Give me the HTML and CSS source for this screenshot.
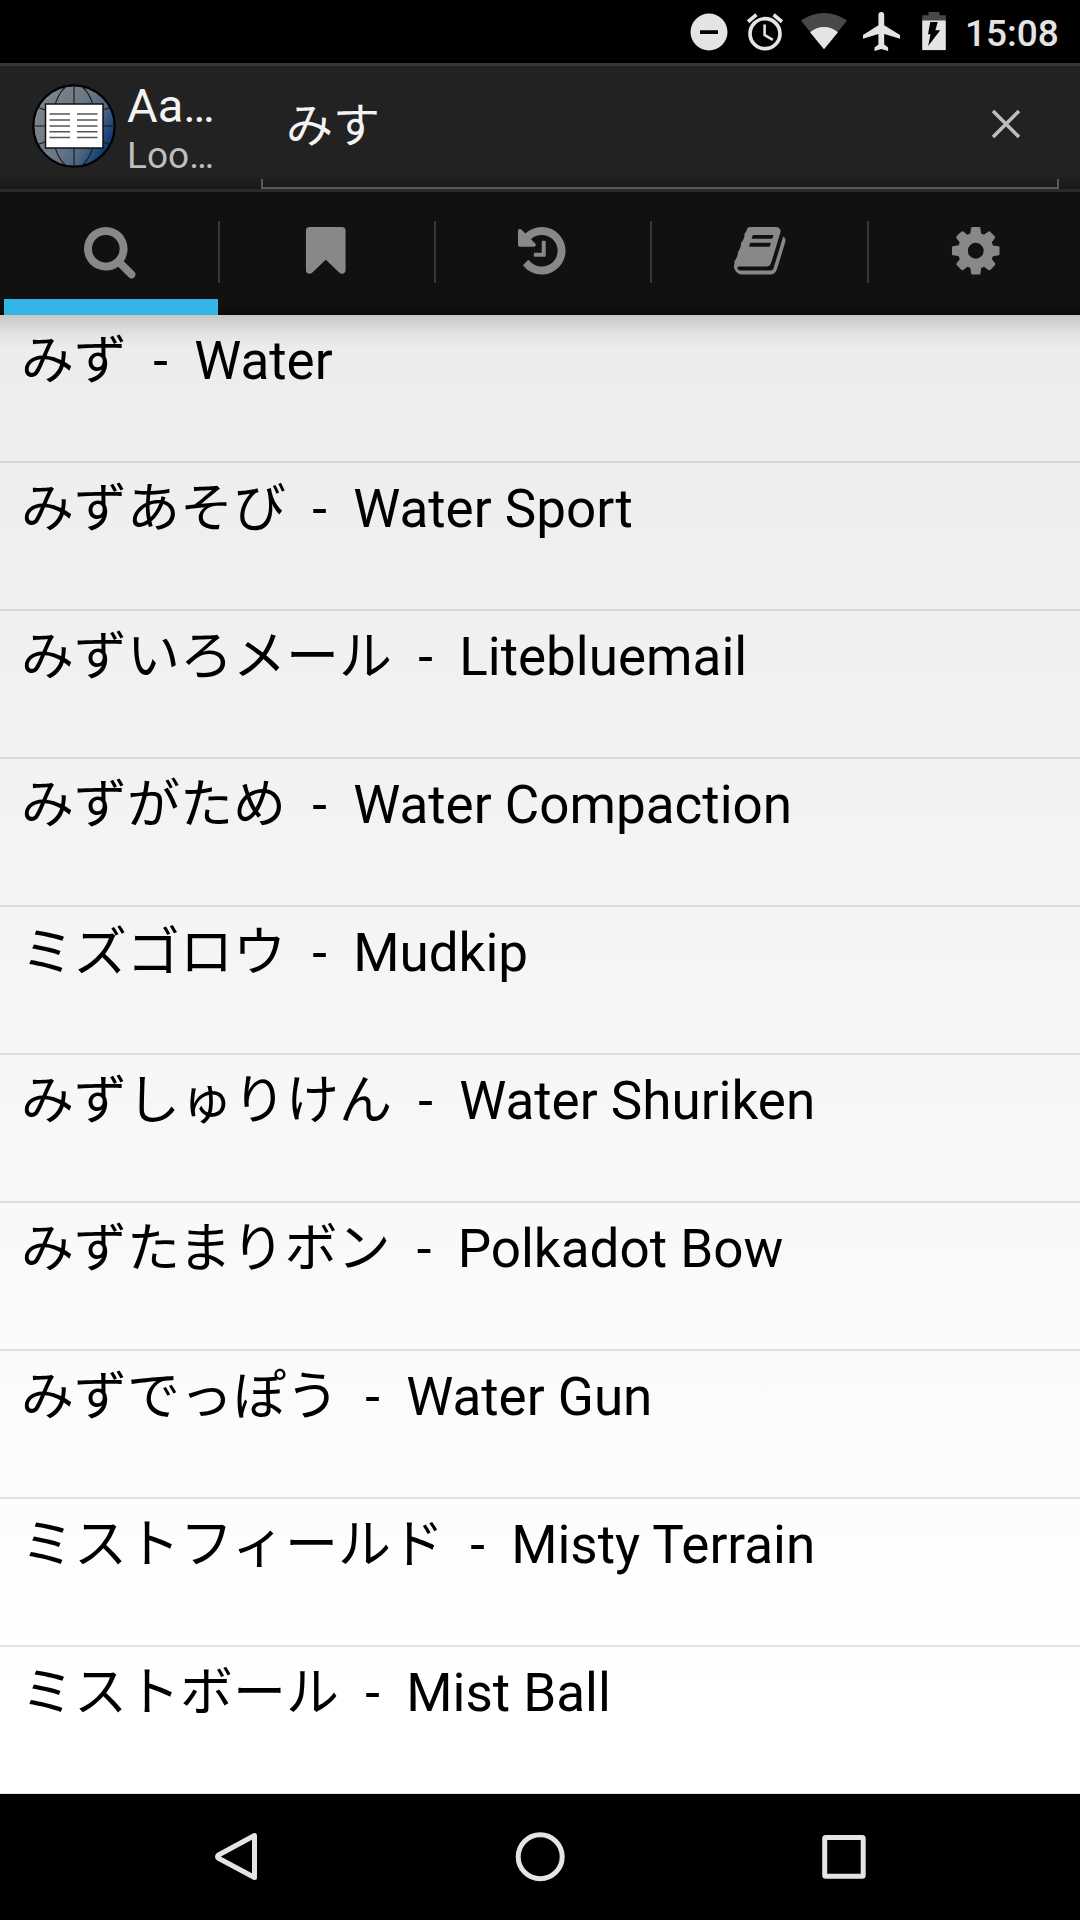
FILE: index.html
```html
<!DOCTYPE html>
<html lang="ja">
<head>
<meta charset="utf-8">
<title>Aard 2 - Lookup</title>
<link rel="stylesheet" href="styles.css">
</head>
<body>
<div class="screen">
  <div class="status-bar">
    <svg class="status-icons" viewBox="680 0 280 63" width="280" height="63">
      <g fill="#e4e4e4">
        <path fill-rule="evenodd" d="M709 13.5a18.5 18.5 0 1 0 0 37 18.5 18.5 0 0 0 0-37zM700 30.2h18v3.8h-18z"/>
        <circle cx="765" cy="33.7" r="15" fill="none" stroke="#e4e4e4" stroke-width="3.7"/>
        <path d="M763.3 24.5h2.6v9.8l7.6 4.5-1.4 2.3-8.8-5.3z"/>
        <path d="M755.3 13.3l2.2 3-8.3 7-2.3-3zM774.7 13.3l-2.2 3 8.3 7 2.3-3z"/>
        <path fill="#484848" d="M801 20.6Q811.500 13 824 13T847 20.600L824 49z"/>
        <path d="M810 32.200Q816.500 27 824 27T838 32.200L824 49.300z"/>
        <path d="M900 38.800v-3.900l-15.800-9.700V14.900a2.900 2.900 0 0 0-5.800 0v10.300L863 34.900v3.900l15.400-4.900v10.700l-3.900 2.900V51l6.800-2 6.800 2v-3.500l-3.900-2.900V33.900z"/>
        <path fill="#484848" d="M922.200 21v-5.800h6.300V12h11v3.200h6.300V21z"/>
        <path d="M922.200 20.500h23.600v29.600h-23.600z"/>
      </g>
      <path fill="#000" d="M930.300 22h7.400l-2.300 8.300h4.800l-12 15.700 2.300-11.700h-2.500z"/>
    </svg>
    <span class="clock">15:08</span>
  </div>

  <div class="action-bar">
    <svg class="logo" viewBox="32 83 84 86" width="84" height="86">
      <defs>
        <linearGradient id="globe" x1="0" y1="0" x2="1" y2="0.55">
          <stop offset="0" stop-color="#85898d"/><stop offset=".55" stop-color="#6c7884"/><stop offset=".8" stop-color="#4d6680"/><stop offset="1" stop-color="#0f3d73"/>
        </linearGradient>
      </defs>
      <circle cx="74" cy="126" r="40.700" fill="url(#globe)" stroke="#000" stroke-width="2.200"/>
      <g fill="none" stroke="#15181c" stroke-width="1.100">
        <path d="M74 85v82M33 126h82M68 85.500C47 97 47 155 68 166.500M80 85.500C101 97 101 155 80 166.500M38 107.500Q74 122 110 107.500M38 144.500Q74 130 110 144.500"/>
      </g>
      <rect x="45.500" y="104" width="57.500" height="44" fill="#fff" stroke="#111" stroke-width="1.500"/>
      <path d="M49.500 114H70M49.500 120H70M49.500 126H70M49.500 131.800H70M49.500 137.500H70M77 114h20.500M77 120h20.500M77 126h20.500M77 131.800h20.500M77 137.500h20.500" stroke="#555" stroke-width="1.500"/>
    </svg>
    <div class="titles">
      <div class="title">Aa…</div>
      <div class="subtitle">Loo…</div>
    </div>
    <div class="search-field">
      <span class="query">みす</span>
      <svg class="clear" viewBox="0 0 32 32" width="32" height="32"><path d="M3 3L29 29M29 3L3 29" stroke="#bdbdbd" stroke-width="3.600"/></svg>
    </div>
  </div>

  <div class="tabs">
    <div class="tab tab-active"><svg class="icon icon-search" viewBox="0 0 1792 1792"><path d="M1216 832q0-185-131.500-316.500T768 384 451.500 515.500 320 832t131.500 316.500T768 1280t316.500-131.500T1216 832zm512 832q0 52-38 90t-90 38q-54 0-90-38l-343-342q-179 124-399 124-143 0-273.500-55.500t-225-150-150-225T64 832t55.500-273.500 150-225 225-150T768 128t273.500 55.500 225 150 150 225T1472 832q0 220-124 399l343 343q37 37 37 90z"/></svg></div>
    <div class="tab"><svg class="icon" viewBox="0 0 1792 1792"><path d="M1420 128q23 0 44 9 33 13 52.500 41t19.500 62v1289q0 34-19.500 62t-52.500 41q-19 8-44 8-48 0-83-32l-441-424-441 424q-36 33-83 33-23 0-44-9-33-13-52.500-41t-19.500-62V240q0-34 19.500-62t52.500-41q21-9 44-9h1048z"/></svg></div>
    <div class="tab"><svg class="icon" viewBox="0 0 1792 1792"><path d="M1664 896q0 156-61 298t-164 245-245 164-298 61q-172 0-327-72.500T305 1387q-7-10-6.500-22.500t8.500-20.500l137-138q10-9 25-9 16 2 23 12 73 95 179 147t225 52q104 0 198.500-40.500T1258 1258t109.500-163.500T1408 896t-40.500-198.500T1258 534t-163.500-109.500T896 384q-98 0-188 35.500T548 521l137 138q31 30 14 69-17 40-59 40H192q-26 0-45-19t-19-45V256q0-42 40-59 39-17 69 14l130 129q107-101 244.500-156.500T896 128q156 0 298 61t245 164 164 245 61 298zM1024 608v448q0 14-9 23t-23 9H672q-14 0-23-9t-9-23v-64q0-14 9-23t23-9h224V608q0-14 9-23t23-9h64q14 0 23 9t9 23z"/></svg></div>
    <div class="tab tab-book"><svg class="icon" viewBox="0 0 1792 1792"><path d="M1703 478q40 57 18 129l-275 906q-19 64-76.500 107.500T1247 1664H324q-77 0-148.500-53.500T76 1479q-24-67-2-127 0-4 3-27t4-37q1-8-3-21.500t-3-19.500q2-11 8-21t16.500-23.500T116 1179q23-38 45-91.500t30-91.500q3-10 .5-30t-.5-28q3-11 17-28t17-23q21-36 42-92t25-90q1-9-2.500-32t.5-28q4-13 22-30.500t22-22.500q19-26 42.500-84.500T404 411q1-8-3-25.500t-2-26.500q2-8 9-18t18-23 17-21q8-12 16.500-30.500t15-35 16-36 19.500-32T533.500 140t36-11.500T617 134l-1 3q38-9 51-9h761q74 0 114 56t18 130l-274 906q-36 119-71.500 153.500T1086 1408H217q-27 0-38 15-11 16-1 43 24 70 144 70h923q29 0 56-15.500t35-41.500l300-987q7-22 5-57 38 15 59 43zM639 480q-4 13 2 22.500t20 9.500h608q13 0 25.500-9.500T1311 480l21-64q4-13-2-22.500t-20-9.500H702q-13 0-25.500 9.500T660 416zm-83 256q-4 13 2 22.500t20 9.500h608q13 0 25.500-9.500T1228 736l21-64q4-13-2-22.500t-20-9.500H619q-13 0-25.500 9.500T577 672z"/></svg></div>
    <div class="tab tab-settings"><svg class="icon" viewBox="0 0 1792 1792"><path d="M1152 896q0-106-75-181t-181-75-181 75-75 181 75 181 181 75 181-75 75-181zm512-109v222q0 12-8 23t-20 13l-185 28q-19 54-39 91 35 50 107 138 10 12 10 25t-9 23q-27 37-99 108t-94 71q-12 0-26-9l-138-108q-44 23-91 38-16 136-29 186-7 28-36 28H785q-14 0-24.500-8.500T749 1634l-28-184q-49-16-90-37l-141 107q-10 9-25 9-14 0-25-11-126-114-165-168-7-10-7-23 0-12 8-23 15-21 51-66.500t54-70.500q-27-50-41-99l-183-27q-13-2-21-12.500t-8-23.500V783q0-12 8-23t19-13l186-28q14-46 39-92-40-57-107-138-10-12-10-24 0-10 9-23 26-36 98.500-107.500T465 263q13 0 26 10l138 107q44-23 91-38 16-136 29-186 7-28 36-28h222q14 0 24.500 8.500T1043 158l28 184q49 16 90 37l142-107q9-9 24-9 13 0 25 10 129 119 165 170 7 8 7 22 0 12-8 23-15 21-51 66.500t-54 70.500q26 50 41 98l183 28q13 2 21 12.500t8 23.500z"/></svg></div>
  </div>

  <div class="results">
    <div class="row">みず  -  Water</div>
    <div class="row">みずあそび  -  Water Sport</div>
    <div class="row">みずいろメール  -  Litebluemail</div>
    <div class="row">みずがため  -  Water Compaction</div>
    <div class="row">ミズゴロウ  -  Mudkip</div>
    <div class="row">みずしゅりけん  -  Water Shuriken</div>
    <div class="row">みずたまりボン  -  Polkadot Bow</div>
    <div class="row">みずでっぽう  -  Water Gun</div>
    <div class="row">ミストフィールド  -  Misty Terrain</div>
    <div class="row">ミストボール  -  Mist Ball</div>
  </div>

  <div class="nav-bar">
    <svg viewBox="210 1827 60 60" width="60" height="60"><path d="M254.500 1835.500V1877.500L218.500 1858.300Q216.500 1856.700 218.500 1855z"/></svg>
    <svg viewBox="510 1827 60 60" width="60" height="60"><circle cx="540.200" cy="1856.700" r="22"/></svg>
    <svg viewBox="814 1827 60 60" width="60" height="60"><rect x="824.700" y="1837.500" width="38.500" height="38.800" rx="1"/></svg>
  </div>
</div>
</body>
</html>
```
FILE: styles.css
```css
body {
  margin: 0;
  background: #000;
  font-family: Roboto, "Noto Sans CJK JP", sans-serif;
}

.screen {
  display: flex;
  flex-direction: column;
  width: 1080px;
  height: 1920px;
  overflow: hidden;
}

.status-bar {
  display: flex;
  flex: 0 0 63px;
  height: 63px;
  min-height: 0;
  padding-left: 680px;
  background: #000;
}

.clock {
  box-sizing: border-box;
  height: 63px;
  margin-left: 5px;
  padding-top: 2px;
  font-size: 37px;
  font-weight: 500;
  line-height: 63px;
  color: #e4e4e4;
}

.action-bar {
  display: flex;
  box-sizing: border-box;
  flex: 0 0 129px;
  border-top: 3px solid #373737;
  border-bottom: 3px solid #292929;
  background: linear-gradient(#222 107px, #1b1b1b 118px, #181818);
}

.logo {
  margin: 17px 0 0 32px;
}

.titles {
  width: 133px;
  margin-left: 11px;
  padding-top: 14px;
  white-space: nowrap;
}

.title {
  font-size: 47px;
  line-height: 52px;
  color: #f3f3f3;
}

.subtitle {
  padding-top: 3px;
  font-size: 37px;
  line-height: 42px;
  color: #bebebe;
}

.search-field {
  display: flex;
  justify-content: space-between;
  box-sizing: border-box;
  width: 798px;
  margin-left: 1px;
  padding: 0 35px 0 23px;
  border-style: solid;
  border-width: 0 2px 2px;
  border-image: linear-gradient(to top, #5a5a5a 10px, transparent 10px) 2;
}

.query {
  height: 70px;
  padding-top: 25px;
  font-size: 47px;
  line-height: 70px;
  color: #f3f3f3;
}

.clear {
  margin-top: 42px;
}

.tabs {
  display: grid;
  flex: 0 0 123px;
  grid-template-columns: 220px 216px 216px 217px 211px;
  background: linear-gradient(#111 108px, #0b0b0b);
}

.tab {
  box-sizing: border-box;
  padding: 31px 0 0 78px;
  background: linear-gradient(#373737, #373737) right 29px / 2px 62px no-repeat;
}

.tab-active {
  padding-left: 82px;
  background:
    linear-gradient(#373737, #373737) right 29px / 2px 62px no-repeat,
    linear-gradient(#33b5e5, #33b5e5) 4px 107px / 214px 16px no-repeat;
}

.tab-book {
  padding-left: 80px;
}

.tab-settings {
  padding-left: 79px;
  background: none;
}

.icon {
  display: block;
  width: 55.500px;
  height: 55.500px;
  fill: #888;
}

.icon-search {
  margin-top: 0;
}

.results {
  flex: 0 0 1479px;
  overflow: hidden;
  background:
    linear-gradient(rgba(0, 0, 0, .16), rgba(0, 0, 0, .08) 12px, rgba(0, 0, 0, .03) 22px, transparent 34px),
    linear-gradient(#ececec, #fff 92%);
}

.row {
  box-sizing: border-box;
  height: 148px;
  padding: 9px 0 0 21px;
  border-bottom: 2px solid rgba(0, 0, 0, .11);
  font-size: 53px;
  line-height: 74px;
  color: #000;
  white-space: pre;
}

.nav-bar {
  display: flex;
  flex: 0 0 126px;
  gap: 240px;
  box-sizing: border-box;
  padding: 33px 0 0 210px;
  background: #000;
}

.nav-bar svg {
  fill: none;
  stroke: #e4e4e4;
  stroke-width: 5;
  stroke-linejoin: round;
}

.nav-bar svg:last-child {
  margin-left: 4px;
}
```
